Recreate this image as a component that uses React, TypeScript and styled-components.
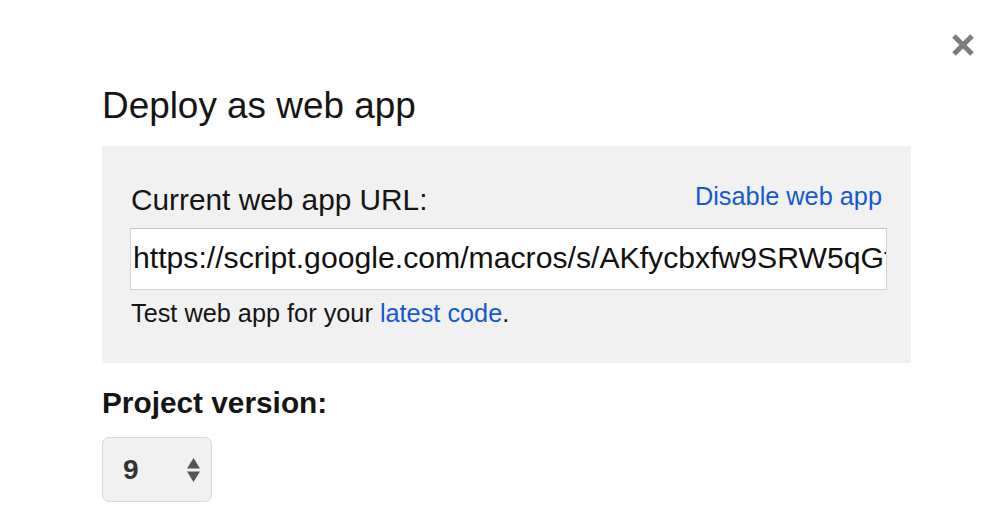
import styled, { createGlobalStyle } from "styled-components";

const GlobalStyle = createGlobalStyle`
  html, body {
    margin: 0;
    padding: 0;
    background: #ffffff;
  }
  body {
    font-family: "Liberation Sans", Arial, Helvetica, sans-serif;
    color: #151515;
  }
`;

const Dialog = styled.div`
  position: relative;
  box-sizing: border-box;
  width: 998px;
  height: 512px;
  padding: 85px 0 0 102px;
  overflow: hidden;
`;

const CloseButton = styled.button`
  position: absolute;
  top: 31px;
  right: 21px;
  width: 28px;
  height: 28px;
  padding: 0;
  border: none;
  background: none;
  cursor: pointer;
  display: flex;
  align-items: center;
  justify-content: center;
`;

const Title = styled.h1`
  margin: 0;
  font-size: 36.9px;
  font-weight: 400;
  line-height: 42px;
  color: #151515;
`;

const Panel = styled.section`
  box-sizing: border-box;
  width: 809px;
  margin-top: 19px;
  padding: 37px 24px 35px 28px;
  background: #f1f1f1;
`;

const PanelHeader = styled.div`
  display: flex;
  justify-content: space-between;
  align-items: flex-start;
`;

const Label = styled.div`
  font-size: 29.8px;
  line-height: 34px;
  color: #151515;
  padding-left: 1px;
`;

const Link = styled.a`
  color: #1558d0;
  text-decoration: none;
  cursor: pointer;
`;

const HeaderLink = styled(Link)`
  font-size: 25.3px;
  line-height: 29px;
  margin-top: -1px;
  margin-right: 5px;
`;

const UrlInput = styled.input`
  display: block;
  box-sizing: border-box;
  width: 757px;
  height: 62px;
  margin-top: 11px;
  padding: 0 0 2px 2px;
  border: 1px solid #d3d3d3;
  border-top-color: #c4c4c4;
  background: #ffffff;
  font-family: "Liberation Sans", Arial, Helvetica, sans-serif;
  font-size: 30.2px;
  color: #111111;
  outline: none;
`;

const Hint = styled.div`
  margin-top: 9px;
  font-size: 25.3px;
  line-height: 29px;
  color: #151515;
  padding-left: 1px;
`;

const SectionHeading = styled.h2`
  margin: 23px 0 0;
  font-size: 29.8px;
  font-weight: 700;
  line-height: 34px;
  color: #151515;
`;

const VersionSelect = styled.div`
  box-sizing: border-box;
  display: flex;
  align-items: center;
  justify-content: space-between;
  width: 110px;
  height: 65px;
  margin-top: 17px;
  padding: 0 11px 0 20px;
  border: 1px solid #d8d8d8;
  border-radius: 7px;
  background: #f1f1f1;
`;

const VersionValue = styled.span`
  font-size: 28px;
  font-weight: 700;
  color: #333333;
  line-height: 1;
`;

function CloseIcon() {
  return (
    <svg width="28" height="28" viewBox="0 0 28 28">
      <path
        d="M5 5 L23 23 M23 5 L5 23"
        stroke="#7c7c7c"
        strokeWidth="5"
        strokeLinecap="butt"
      />
    </svg>
  );
}

function UpDownIcon() {
  return (
    <svg width="13" height="24" viewBox="0 0 13 24">
      <path d="M6.5 0 L13 10.5 L0 10.5 Z" fill="#555555" />
      <path d="M0 13.5 L13 13.5 L6.5 24 Z" fill="#555555" />
    </svg>
  );
}

export default function App() {
  const url = "https://script.google.com/macros/s/AKfycbxfw9SRW5qGfRlLm3pQ0/exec";

  return (
    <>
      <GlobalStyle />
      <Dialog>
        <CloseButton aria-label="Close">
          <CloseIcon />
        </CloseButton>
        <Title>Deploy as web app</Title>
        <Panel>
          <PanelHeader>
            <Label>Current web app URL:</Label>
            <HeaderLink>Disable web app</HeaderLink>
          </PanelHeader>
          <UrlInput readOnly value={url} />
          <Hint>
            Test web app for your <Link>latest code</Link>.
          </Hint>
        </Panel>
        <SectionHeading>Project version:</SectionHeading>
        <VersionSelect>
          <VersionValue>9</VersionValue>
          <UpDownIcon />
        </VersionSelect>
      </Dialog>
    </>
  );
}
